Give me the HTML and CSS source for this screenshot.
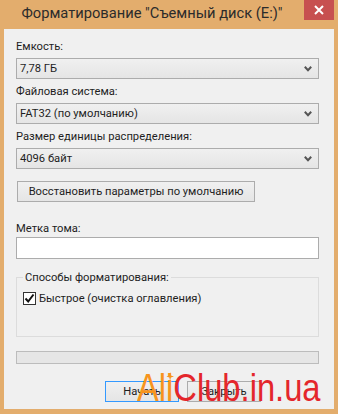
FILE: index.html
```html
<!DOCTYPE html>
<html lang="ru">
<head>
    <meta charset="UTF-8">
    <meta name="viewport" content="width=device-width, initial-scale=1.0">
    <title>Форматирование</title>
    <link rel="stylesheet" href="styles.css">
</head>
<body>
    <div class="window">
        <div class="titlebar">
            <div class="title">Форматирование "Съемный диск (E:)"</div>
            <div class="close-button">
                <svg width="10" height="10" viewBox="0 0 10 10"><path d="M1 1 L9 9 M9 1 L1 9" stroke="#fff" stroke-width="2"/></svg>
            </div>
        </div>

        <div class="panel">
            <div class="field">
                <div class="field-label">Емкость:</div>
                <div class="select"><span>7,78 ГБ</span><svg class="chevron" width="8" height="6" viewBox="0 0 8 6"><path d="M0.8 0.8 L4 4.2 L7.2 0.8" fill="none" stroke="#555" stroke-width="2"/></svg></div>
            </div>
            <div class="field">
                <div class="field-label">Файловая система:</div>
                <div class="select"><span>FAT32 (по умолчанию)</span><svg class="chevron" width="8" height="6" viewBox="0 0 8 6"><path d="M0.8 0.8 L4 4.2 L7.2 0.8" fill="none" stroke="#555" stroke-width="2"/></svg></div>
            </div>
            <div class="field">
                <div class="field-label">Размер единицы распределения:</div>
                <div class="select"><span>4096 байт</span><svg class="chevron" width="8" height="6" viewBox="0 0 8 6"><path d="M0.8 0.8 L4 4.2 L7.2 0.8" fill="none" stroke="#555" stroke-width="2"/></svg></div>
            </div>

            <button type="button" class="btn btn-restore">Восстановить параметры по умолчанию</button>

            <div class="field-label volume-label">Метка тома:</div>
            <div class="textbox"></div>

            <fieldset class="group">
                <legend>Способы форматирования:</legend>
                <label class="check">
                    <span class="checkbox">
                        <svg width="11" height="11" viewBox="0 0 11 11"><path d="M1.5 5.5 L4.2 8.5 L9.5 1.5" fill="none" stroke="#111" stroke-width="2"/></svg>
                    </span>
                    Быстрое (очистка оглавления)
                </label>
            </fieldset>

            <div class="progress"></div>

            <div class="actions">
                <button type="button" class="btn btn-default">Начать</button>
                <button type="button" class="btn">Закрыть</button>
            </div>

            <div class="watermark"><span class="wm-ali">Al<span class="wm-i">i<svg class="spark" width="9" height="9" viewBox="0 0 10 10"><path d="M5 0 L6 4 L10 5 L6 6 L5 10 L4 6 L0 5 L4 4 Z" fill="#f7941d"/></svg></span></span><span class="wm-club">Club.in.ua</span></div>
        </div>
    </div>
</body>
</html>
```

FILE: styles.css
```css
body {
    margin: 0;
    padding: 0;
    background-color: #e3ad6d;
    font-family: Roboto, 'Noto Sans', sans-serif;
}

.window {
    width: 338px;
    height: 414px;
    display: flex;
    flex-direction: column;
}

.titlebar {
    height: 29px;
    display: flex;
    align-items: flex-start;
}

.title {
    flex: 1;
    text-align: center;
    font-size: 14.7px;
    line-height: 22px;
    color: #2b2b2b;
    padding-top: 2px;
    white-space: nowrap;
}

.close-button {
    width: 30px;
    height: 20px;
    margin-right: 4px;
    background-color: #c75050;
    display: flex;
    align-items: center;
    justify-content: center;
}

.panel {
    position: relative;
    margin: 0 4px;
    height: 380px;
    box-sizing: border-box;
    padding: 10px 15px 0 12px;
    background-color: #f0f0f0;
    font-size: 11.2px;
    color: #1e1e1e;
    white-space: nowrap;
}

.field {
    margin-bottom: 5px;
}

.field-label {
    line-height: 15px;
    margin-bottom: 4px;
}

.select {
    height: 21px;
    box-sizing: border-box;
    border: 1px solid #acacac;
    background: linear-gradient(#f0f0f0, #e5e5e5);
    display: flex;
    align-items: center;
    justify-content: space-between;
    padding: 0 6px 0 3px;
}

.chevron {
    display: block;
}

.btn {
    font-family: inherit;
    font-size: 11.2px;
    color: #1e1e1e;
    height: 21px;
    padding: 0;
    border: 1px solid #acacac;
    background: linear-gradient(#f0f0f0, #e5e5e5);
    box-sizing: border-box;
    white-space: nowrap;
}

.btn-restore {
    display: block;
    width: 238px;
    margin: 12px 0 0 1px;
}

.volume-label {
    margin-top: 19px;
    margin-bottom: 1px;
}

.textbox {
    height: 22px;
    box-sizing: border-box;
    border: 1px solid #acacac;
    background-color: #fff;
}

.group {
    margin: 11px 0 0;
    padding: 6px 6px 0;
    height: 67px;
    box-sizing: border-box;
    border: 1px solid #dcdcdc;
}

.group legend {
    padding: 0 2px;
    margin-left: 0;
    line-height: 15px;
}

.check {
    display: flex;
    align-items: center;
    gap: 3px;
    line-height: 15px;
}

.checkbox {
    width: 13px;
    height: 13px;
    box-sizing: border-box;
    border: 1px solid #333;
    background-color: #fff;
    display: flex;
    align-items: center;
    justify-content: center;
}

.progress {
    margin-top: 14px;
    height: 13px;
    box-sizing: border-box;
    border: 1px solid #bcbcbc;
    background-color: #e6e6e6;
}

.actions {
    display: flex;
    gap: 8px;
    margin: 17px 0 0 89px;
}

.actions .btn {
    width: 74px;
}

.btn-default {
    border-color: #3399ff;
}

.watermark {
    position: absolute;
    left: 133px;
    top: 338px;
    font-family: 'Liberation Sans', sans-serif;
    font-size: 38px;
    line-height: 42px;
    white-space: nowrap;
    transform: scaleX(0.86);
    transform-origin: left top;
}

.wm-ali {
    color: #f7941d;
}

.wm-i {
    position: relative;
}

.spark {
    position: absolute;
    left: 0;
    top: 5px;
}

.wm-club {
    color: #e4262b;
}
```
